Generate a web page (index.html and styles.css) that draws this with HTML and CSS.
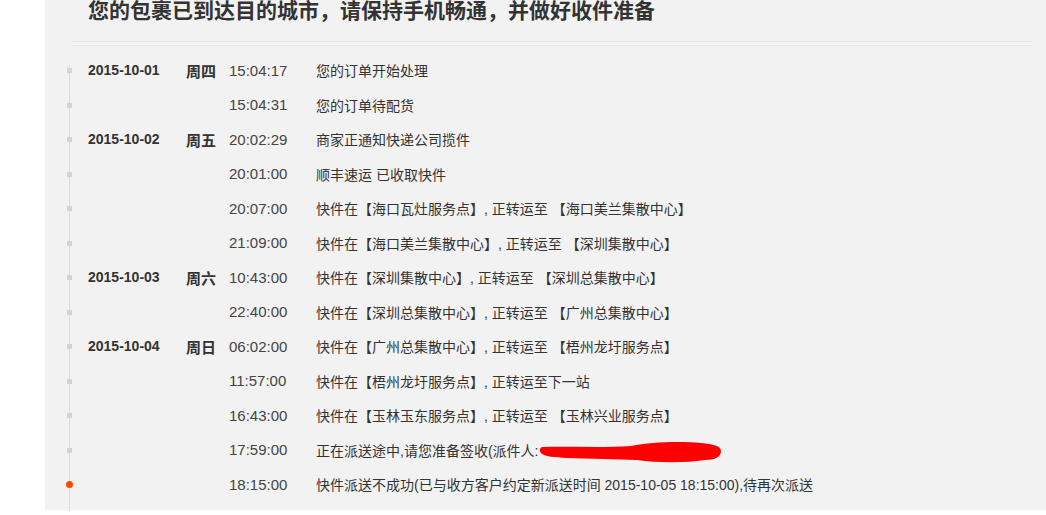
FILE: index.html
```html
<!DOCTYPE html>
<html lang="zh-CN">

<head>
    <meta charset="UTF-8">
    <meta name="viewport" content="width=device-width, initial-scale=1.0">
    <title>物流跟踪</title>
    <link rel="stylesheet" href="styles.css">
</head>

<body>
    <div class="track-panel">
        <h2 class="track-title">您的包裹已到达目的城市，请保持手机畅通，并做好收件准备</h2>
        <div class="track-divider"></div>

        <ul class="track-list">
            <li class="track-item">
                <span class="t-date">2015-10-01</span><span class="t-week">周四</span>
                <span class="t-time">15:04:17</span><span class="t-text">您的订单开始处理</span>
            </li>
            <li class="track-item">
                <span class="t-date"></span><span class="t-week"></span>
                <span class="t-time">15:04:31</span><span class="t-text">您的订单待配货</span>
            </li>
            <li class="track-item">
                <span class="t-date">2015-10-02</span><span class="t-week">周五</span>
                <span class="t-time">20:02:29</span><span class="t-text">商家正通知快递公司揽件</span>
            </li>
            <li class="track-item">
                <span class="t-date"></span><span class="t-week"></span>
                <span class="t-time">20:01:00</span><span class="t-text">顺丰速运 已收取快件</span>
            </li>
            <li class="track-item">
                <span class="t-date"></span><span class="t-week"></span>
                <span class="t-time">20:07:00</span><span class="t-text">快件在【海口瓦灶服务点】, 正转运至 【海口美兰集散中心】</span>
            </li>
            <li class="track-item">
                <span class="t-date"></span><span class="t-week"></span>
                <span class="t-time">21:09:00</span><span class="t-text">快件在【海口美兰集散中心】, 正转运至 【深圳集散中心】</span>
            </li>
            <li class="track-item">
                <span class="t-date">2015-10-03</span><span class="t-week">周六</span>
                <span class="t-time">10:43:00</span><span class="t-text">快件在【深圳集散中心】, 正转运至 【深圳总集散中心】</span>
            </li>
            <li class="track-item">
                <span class="t-date"></span><span class="t-week"></span>
                <span class="t-time">22:40:00</span><span class="t-text">快件在【深圳总集散中心】, 正转运至 【广州总集散中心】</span>
            </li>
            <li class="track-item">
                <span class="t-date">2015-10-04</span><span class="t-week">周日</span>
                <span class="t-time">06:02:00</span><span class="t-text">快件在【广州总集散中心】, 正转运至 【梧州龙圩服务点】</span>
            </li>
            <li class="track-item">
                <span class="t-date"></span><span class="t-week"></span>
                <span class="t-time">11:57:00</span><span class="t-text">快件在【梧州龙圩服务点】, 正转运至下一站</span>
            </li>
            <li class="track-item">
                <span class="t-date"></span><span class="t-week"></span>
                <span class="t-time">16:43:00</span><span class="t-text">快件在【玉林玉东服务点】, 正转运至 【玉林兴业服务点】</span>
            </li>
            <li class="track-item">
                <span class="t-date"></span><span class="t-week"></span>
                <span class="t-time">17:59:00</span>
                <span class="t-text">正在派送途中,请您准备签收(派件人:<svg class="scribble" width="184" height="22" viewBox="0 0 184 22">
                        <path d="M3 6 C30 5 60 7 92 5 C112 1 140 0 162 2 C174 3 182 5 182 10 C182 16 176 19 166 19 C146 22 118 22 98 19 C78 18 50 18 28 17 C16 16 5 16 2 12 C0 9 1 7 3 6 Z" fill="#ff0000" />
                    </svg></span>
            </li>
            <li class="track-item current">
                <span class="t-date"></span><span class="t-week"></span>
                <span class="t-time">18:15:00</span><span class="t-text">快件派送不成功(已与收方客户约定新派送时间 2015-10-05 18:15:00),待再次派送</span>
            </li>
        </ul>
    </div>
</body>

</html>
```

FILE: styles.css
```css
body {
    margin: 0;
    background-color: #fff;
    font-family: "Liberation Sans", "Noto Sans CJK SC", sans-serif;
    color: #333;
    overflow: hidden;
}

.track-panel {
    margin-left: 45px;
    height: 513px;
    background-color: #f2f2f2;
    border-bottom: 2px solid #f7f7f7;
}

.track-title {
    margin: -4px 0 0 0;
    padding-left: 43px;
    font-size: 21px;
    line-height: 30px;
    font-weight: bold;
    color: #333;
}

.track-divider {
    margin: 15px 14px 0 27px;
    height: 1px;
    background-color: #e2e2e2;
    box-shadow: 0 4px 0 #ebebeb;
}

.track-list {
    position: relative;
    list-style: none;
    margin: 11px 0 0 0;
    padding: 0 0 0 43px;
}

/* vertical line of the timeline */
.track-list::before {
    content: "";
    position: absolute;
    left: 24px;
    top: 12px;
    bottom: -16px;
    width: 1px;
    background-color: #dcdcdc;
}

.track-item {
    position: relative;
    display: flex;
    align-items: center;
    height: 34.5px;
    font-size: 14px;
}

.track-item::before {
    content: "";
    position: absolute;
    left: -21px;
    top: 15px;
    width: 5px;
    height: 5px;
    background-color: #d4d4d4;
}

.track-item.current::before {
    left: -22px;
    top: 14px;
    width: 7px;
    height: 7px;
    border-radius: 50%;
    background-color: #ff4a00;
}

.t-date {
    width: 98px;
    flex-shrink: 0;
    font-weight: bold;
    font-size: 14px;
    color: #333;
}

.t-week {
    width: 43px;
    flex-shrink: 0;
    font-weight: bold;
    font-size: 15px;
    color: #333;
}

.t-time {
    width: 87px;
    flex-shrink: 0;
    font-size: 15px;
    color: #444;
}

.t-text {
    display: flex;
    align-items: center;
    white-space: nowrap;
    color: #333;
}

.scribble {
    margin-left: 1px;
    margin-top: 4px;
}
```
